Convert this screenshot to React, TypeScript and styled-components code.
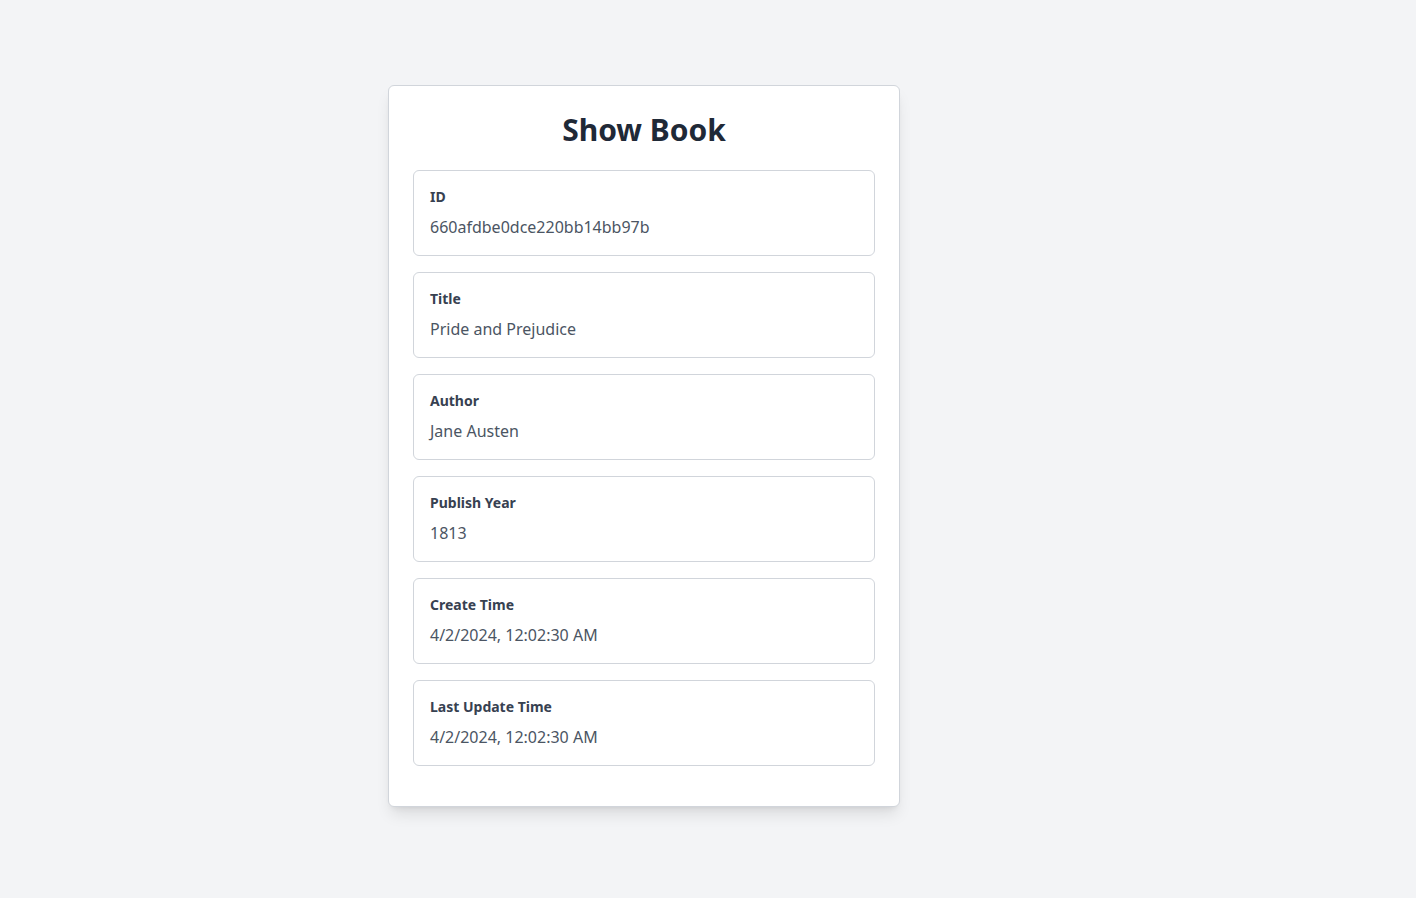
import React from "react";
import styled, { createGlobalStyle } from "styled-components";

const Global = createGlobalStyle`
  html, body { margin: 0; padding: 0; background: #f3f4f6; }
  body { font-family: "Noto Sans", "Open Sans", sans-serif; }
`;

const Page = styled.div`
  min-height: 898px;
  box-sizing: border-box;
  padding: 85px 0 0 388px;
  background: #f3f4f6;
`;

const Card = styled.div`
  width: 512px;
  box-sizing: border-box;
  background: #ffffff;
  border: 1px solid #d1d5db;
  border-radius: 6px;
  box-shadow: 0 10px 15px -3px rgba(0,0,0,0.1), 0 4px 6px -4px rgba(0,0,0,0.1);
  padding: 24px 24px 24px;
`;

const Title = styled.h1`
  margin: 2px 0 22px;
  text-align: center;
  font-size: 30px;
  line-height: 36px;
  font-weight: 700;
  color: #1f2937;
`;

const Field = styled.div`
  border: 1px solid #d1d5db;
  border-radius: 6px;
  padding: 16px;
  margin-bottom: 16px;
  display: flex;
  flex-direction: column;
  gap: 8px;
`;

const Label = styled.div`
  font-size: 14px;
  line-height: 20px;
  font-weight: 700;
  color: #374151;
`;

const Value = styled.div`
  font-size: 16px;
  line-height: 24px;
  color: #4b5563;
`;

const fields = [
  ["ID", "660afdbe0dce220bb14bb97b"],
  ["Title", "Pride and Prejudice"],
  ["Author", "Jane Austen"],
  ["Publish Year", "1813"],
  ["Create Time", "4/2/2024, 12:02:30 AM"],
  ["Last Update Time", "4/2/2024, 12:02:30 AM"],
];

export default function App() {
  return (
    <Page>
      <Global />
      <Card>
        <Title>Show Book</Title>
        {fields.map(([l, v]) => (
          <Field key={l}>
            <Label>{l}</Label>
            <Value>{v}</Value>
          </Field>
        ))}
      </Card>
    </Page>
  );
}
